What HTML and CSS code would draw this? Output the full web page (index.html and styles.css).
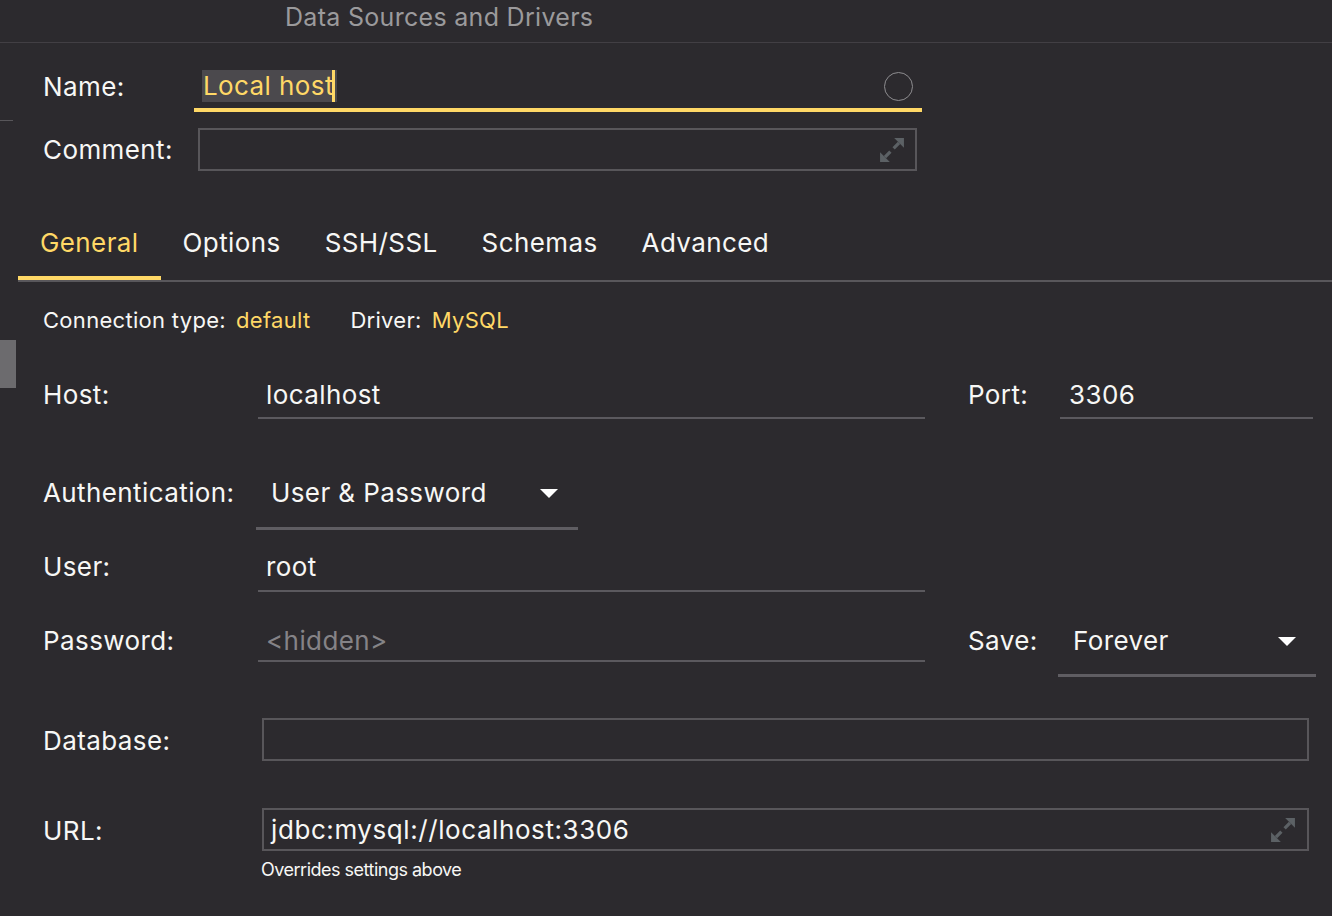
FILE: index.html
```html
<!DOCTYPE html>
<html lang="en">
<head>
<meta charset="utf-8">
<title>Data Sources and Drivers</title>
<link rel="stylesheet" href="styles.css">
</head>
<body>
<div class="window">
  <header class="titlebar"><span class="title">Data Sources and Drivers</span></header>
  <div class="main">
    <aside class="side">
      <div class="side-line"></div>
      <div class="side-thumb"></div>
    </aside>
    <section class="content">
      <div class="trow name-row">
        <div class="tlabel">Name:</div>
        <div class="name-field">
          <span class="sel">Local host<span class="caret"></span></span>
          <span class="circle"></span>
        </div>
      </div>
      <div class="trow comment-row">
        <div class="tlabel">Comment:</div>
        <div class="comment-box">
          <svg class="expand" viewBox="0 0 24 24" aria-hidden="true"><path class="head" d="M14 1h9v9z"/><path class="head" d="M1 14v9h9z"/><path class="shaft" d="M18.5 5.5l-5 5M5.5 18.5l5-5"/></svg>
        </div>
      </div>

      <nav class="tabs">
        <span class="tab active">General</span>
        <span class="tab">Options</span>
        <span class="tab">SSH/SSL</span>
        <span class="tab">Schemas</span>
        <span class="tab">Advanced</span>
      </nav>

      <div class="conn">
        <span class="ck">Connection type:</span><span class="cv">default</span>
        <span class="ck driver">Driver:</span><span class="cv">MySQL</span>
      </div>

      <div class="form">
        <div class="frow host-row">
          <div class="flabel">Host:</div>
          <div class="field wide">localhost</div>
          <div class="flabel small">Port:</div>
          <div class="field port">3306</div>
        </div>
        <div class="frow auth-row">
          <div class="flabel">Authentication:</div>
          <div class="select auth"><span>User &amp; Password</span><svg class="arrow" viewBox="0 0 18 9" aria-hidden="true"><path d="M0 0h18L9 9z"/></svg></div>
        </div>
        <div class="frow user-row">
          <div class="flabel">User:</div>
          <div class="field wide">root</div>
        </div>
        <div class="frow pass-row">
          <div class="flabel">Password:</div>
          <div class="field wide hidden">&lt;hidden&gt;</div>
          <div class="flabel small">Save:</div>
          <div class="select save"><span>Forever</span><svg class="arrow" viewBox="0 0 18 9" aria-hidden="true"><path d="M0 0h18L9 9z"/></svg></div>
        </div>
        <div class="frow db-row">
          <div class="flabel boxed">Database:</div>
          <div class="boxcol">
            <div class="box"></div>
          </div>
        </div>
        <div class="frow url-row">
          <div class="flabel boxed">URL:</div>
          <div class="boxcol">
            <div class="box url"><span class="url-text">jdbc:mysql://localhost:3306</span>
              <svg class="expand" viewBox="0 0 24 24" aria-hidden="true"><path class="head" d="M14 1h9v9z"/><path class="head" d="M1 14v9h9z"/><path class="shaft" d="M18.5 5.5l-5 5M5.5 18.5l5-5"/></svg>
            </div>
            <div class="hint">Overrides settings above</div>
          </div>
        </div>
      </div>
    </section>
  </div>
</div>
</body>
</html>
```

FILE: styles.css
```css
* { box-sizing: border-box; }
html, body {
  margin: 0;
  padding: 0;
  background: #2c2a2e;
}
body {
  width: 1332px;
  height: 916px;
  overflow: hidden;
  font-family: Inter, "Noto Sans", "Liberation Sans", sans-serif;
  color: #f7f7f5;
  font-size: 26px;
  letter-spacing: 0.4px;
}

.titlebar {
  height: 43px;
  border-bottom: 1px solid #423f44;
  padding-left: 285px;
}
.title {
  display: block;
  line-height: 34px;
  font-size: 25px;
  letter-spacing: 0.3px;
  color: #9b9a9c;
}

.main {
  display: flex;
}
.side {
  width: 18px;
  flex: none;
}
.side-line {
  margin-top: 77px;
  width: 13px;
  height: 1px;
  background: #58565a;
}
.side-thumb {
  margin-top: 219px;
  width: 16px;
  height: 48px;
  background: #6c6b6e;
}
.content {
  flex: 1;
}

/* top rows */
.trow {
  display: flex;
  padding-left: 25px;
}
.tlabel {
  width: 151px;
  flex: none;
  line-height: 32px;
}
.name-row {
  margin-top: 23px;
  align-items: flex-start;
}
.name-row .tlabel { margin-top: 5px; }
.name-field {
  width: 728px;
  height: 46px;
  border-bottom: 4px solid #ffd866;
  display: flex;
  align-items: flex-start;
  padding-top: 4px;
}
.sel {
  margin-left: 8px;
  padding: 0 2px 0 1px;
  background: #4b494d;
  color: #ffd866;
  line-height: 32px;
  white-space: nowrap;
  font-size: 26px;
}
.caret {
  display: inline-block;
  width: 3px;
  height: 32px;
  margin-left: -2px;
  background: #ffd866;
  vertical-align: top;
}
.circle {
  margin-left: auto;
  margin-right: 9px;
  margin-top: 2px;
  width: 29px;
  height: 29px;
  border: 1.5px solid #8e8d90;
  border-radius: 50%;
}
.comment-row {
  margin-top: 16px;
  align-items: center;
}
.comment-box {
  margin-left: 4px;
  width: 719px;
  height: 43px;
  border: 2px solid #58565a;
  display: flex;
  align-items: center;
  justify-content: flex-end;
  padding-right: 10px;
}
.expand {
  width: 26px;
  height: 26px;
  display: block;
}
.expand .head { fill: #5c6165; }
.expand .shaft { stroke: #5c6165; stroke-width: 3; fill: none; }

/* tabs */
.tabs {
  margin-top: 37px;
  display: flex;
  border-bottom: 2px solid #59575b;
}
.tab {
  padding: 18px 22px 16px 22px;
  line-height: 34px;
  border-bottom: 4px solid transparent;
  white-space: nowrap;
}
.tab.active {
  color: #ffd866;
  border-bottom-color: #ffd866;
}

/* connection info */
.conn {
  margin-top: 23px;
  padding-left: 25px;
  line-height: 30px;
  font-size: 22px;
  letter-spacing: 0.3px;
  display: flex;
}
.cv {
  color: #ffd866;
  margin-left: 10px;
}
.driver { margin-left: 40px; }

/* form */
.form {
  margin-top: 44px;
  padding-left: 25px;
}
.frow {
  display: flex;
  align-items: flex-start;
}
.flabel {
  width: 215px;
  flex: none;
  line-height: 32px;
  white-space: nowrap;
}
.flabel.small {
  width: 92px;
  margin-left: 43px;
}
.field {
  line-height: 32px;
  padding: 0 8px 6px 8px;
  border-bottom: 2px solid #5b595e;
  white-space: nowrap;
}
.field.wide { width: 667px; }
.field.port { width: 253px; padding-left: 9px; }
.field.hidden { color: #858387; padding-bottom: 3px; }
.user-row .field { padding-bottom: 7px; }

.select {
  display: flex;
  align-items: center;
  line-height: 32px;
  padding: 0 20px 18px 15px;
  border-bottom: 3px solid #5f5d62;
  justify-content: space-between;
  white-space: nowrap;
}
.select .arrow {
  width: 18px;
  height: 9px;
  fill: #ffffff;
  display: block;
}
.select.auth {
  width: 322px;
  margin-left: -2px;
}
.select.save {
  width: 258px;
  margin-left: -2px;
  padding-bottom: 17px;
}

.auth-row { margin-top: 58px; }
.user-row { margin-top: 21px; }
.pass-row { margin-top: 33px; }
.db-row { margin-top: 41px; }
.url-row { margin-top: 47px; }

.flabel.boxed { margin-top: 7px; }
.boxcol {
  margin-left: 4px;
  width: 1047px;
}
.box {
  height: 43px;
  border: 2px solid #58565a;
}
.box.url {
  display: flex;
  align-items: center;
  justify-content: space-between;
  padding: 0 11px 0 7px;
  white-space: nowrap;
}
.url-text { letter-spacing: 0.58px; }
.hint {
  margin-top: 8px;
  margin-left: -1px;
  font-size: 18px;
  line-height: 22px;
  letter-spacing: -0.5px;
}
```
